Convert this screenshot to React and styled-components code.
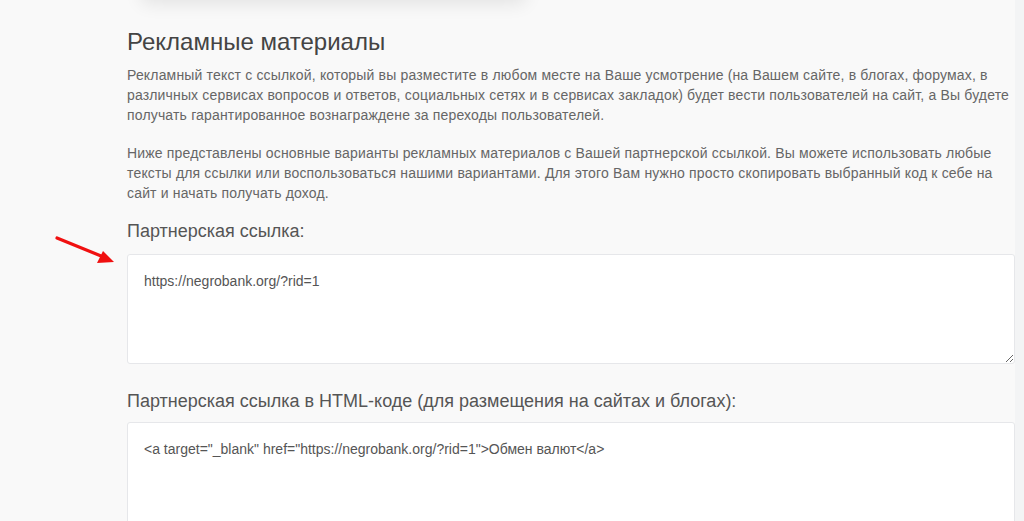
import React from 'react';
import styled, { createGlobalStyle } from 'styled-components';

const GlobalStyle = createGlobalStyle`
  html, body {
    margin: 0;
    padding: 0;
    background: #f9f9f9;
    font-family: "Liberation Sans", Arial, sans-serif;
    overflow: hidden;
  }
`;

const Page = styled.div`
  display: flex;
  min-height: 521px;
  position: relative;
`;

const Main = styled.div`
  flex: 1;
  padding: 0 0 0 127px;
  box-sizing: border-box;
`;

const SideStrip = styled.div`
  flex: 0 0 9px;
  background: #f3f4f5;
`;

const TopCard = styled.div`
  width: 385px;
  height: 40px;
  margin: -40px 0 0 14px;
  background: #fafafa;
  border-radius: 6px;
  box-shadow: 0 4px 18px rgba(0, 0, 0, 0.09);
`;

const Content = styled.div`
  padding-top: 29px;
`;

const Title = styled.h2`
  margin: 0 0 10px;
  font-size: 24px;
  line-height: 26px;
  font-weight: 400;
  color: #444;
`;

const Text = styled.p`
  margin: 0 0 18px;
  font-size: 14px;
  line-height: 20px;
  letter-spacing: 0.17px;
  color: #666;
`;

const Label = styled.div`
  margin: ${props => props.top || 0}px 0 ${props => props.bottom || 12}px;
  font-size: 18px;
  line-height: 20px;
  color: #555;
`;

const Field = styled.textarea`
  display: block;
  width: 100%;
  height: 110px;
  box-sizing: border-box;
  margin: 0;
  padding: 16px;
  border: 1px solid #e6e7ea;
  border-radius: 3px;
  background: #fff;
  font-family: "Liberation Sans", Arial, sans-serif;
  font-size: 14px;
  line-height: 20px;
  color: #555;
  resize: vertical;
  outline: none;
`;

const Arrow = styled.svg`
  position: absolute;
  left: 50px;
  top: 230px;
  width: 70px;
  height: 40px;
  pointer-events: none;
`;

const App = () => {
  return (
    <>
      <GlobalStyle />
      <Page>
        <Main>
          <TopCard />
          <Content>
            <Title>Рекламные материалы</Title>
            <Text>
              Рекламный текст с ссылкой, который вы разместите в любом месте на Ваше усмотрение (на Вашем сайте, в блогах, форумах, в различных сервисах вопросов и ответов, социальных сетях и в сервисах закладок) будет вести пользователей на сайт, а Вы будете получать гарантированное вознаграждене за переходы пользователей.
            </Text>
            <Text>
              Ниже представлены основные варианты рекламных материалов с Вашей партнерской ссылкой. Вы можете использовать любые тексты для ссылки или воспользоваться нашими вариантами. Для этого Вам нужно просто скопировать выбранный код к себе на сайт и начать получать доход.
            </Text>
            <Label top={17} bottom={13}>Партнерская ссылка:</Label>
            <Field readOnly defaultValue="https://negrobank.org/?rid=1" />
            <Label top={27} bottom={11}>
              Партнерская ссылка в HTML-коде (для размещения на сайтах и блогах):
            </Label>
            <Field
              readOnly
              defaultValue={'<a target="_blank" href="https://negrobank.org/?rid=1">Обмен валют</a>'}
            />
          </Content>
        </Main>
        <SideStrip />
        <Arrow viewBox="0 0 70 40">
          <line x1="7" y1="8" x2="56" y2="28" stroke="#f01010" strokeWidth="3.2" strokeLinecap="round" />
          <polygon points="64,32 47,33 53,21" fill="#f01010" />
        </Arrow>
      </Page>
    </>
  );
};

export default App;
